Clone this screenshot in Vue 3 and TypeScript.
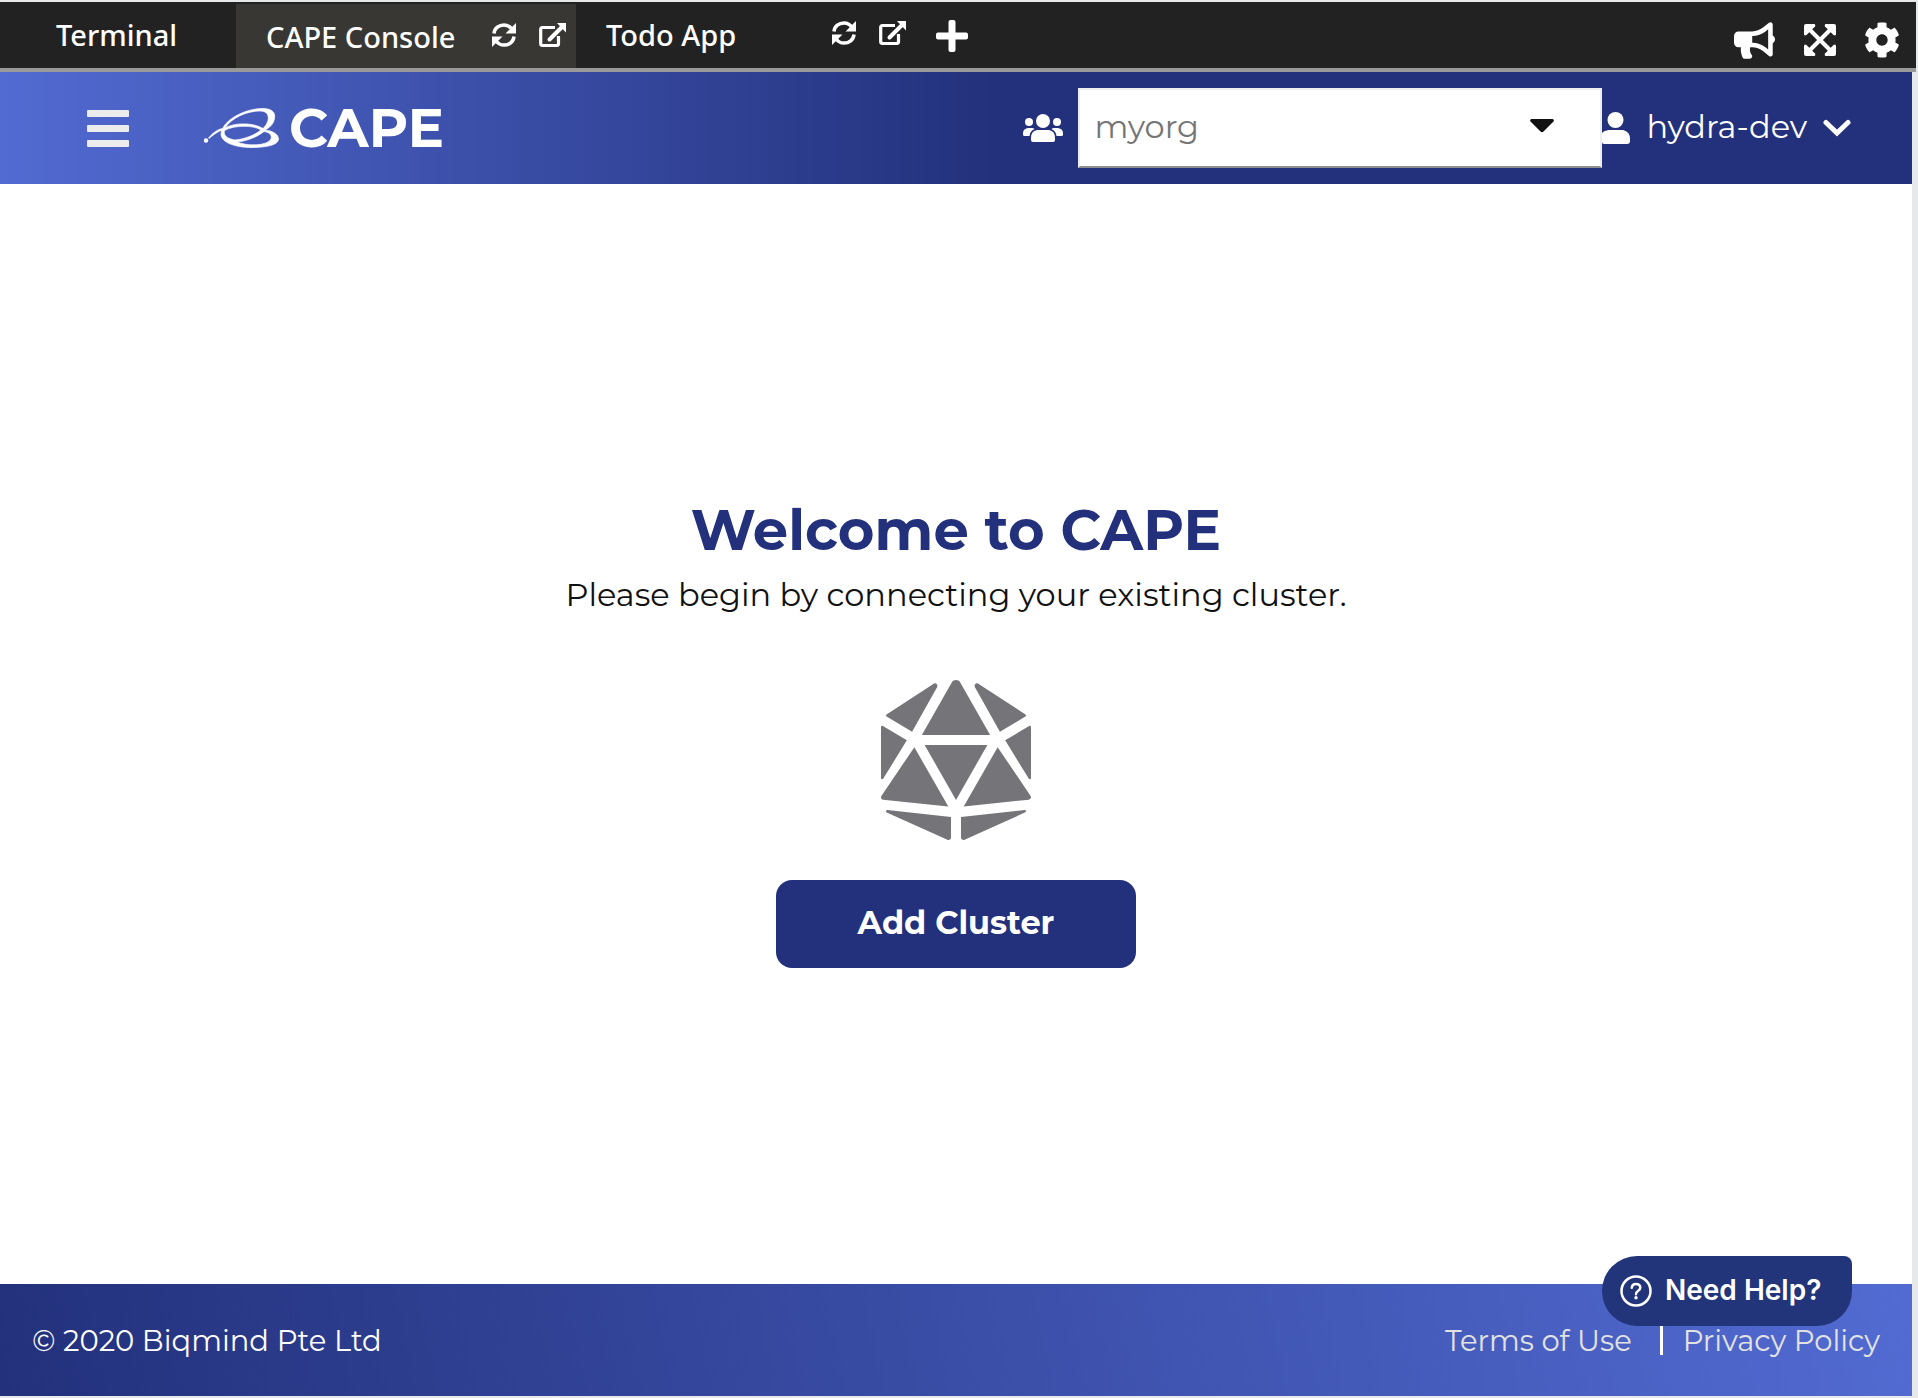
<script setup lang="ts">
import { ref } from 'vue'

interface Tab {
  name: string
  active: boolean
  tools: boolean
}

const tabs: Tab[] = [
  { name: 'Terminal', active: false, tools: false },
  { name: 'CAPE Console', active: true, tools: true },
  { name: 'Todo App', active: false, tools: true },
]

const org = ref('myorg')
</script>

<template>
  <div class="page">
    <nav class="tabbar">
      <div
        v-for="tab in tabs"
        :key="tab.name"
        class="tab"
        :class="{ active: tab.active, plain: !tab.tools }"
      >
        <button class="tab-name" type="button">{{ tab.name }}</button>
        <template v-if="tab.tools">
          <button class="icon-btn" type="button" aria-label="Reload">
            <svg width="24" height="24" viewBox="0 0 24 24" fill="none" stroke="#fff" stroke-width="3.500">
              <path d="M2 10.500C2.500 5 7 1.900 12 1.900c4 0 6.500 2 8.500 5" />
              <path d="M22 13.500C21.500 19 17 22.100 12 22.100c-4 0-6.500-2-8.500-5" />
              <path d="M24 0v10.500H13.500l3.500-3.500L21 3z" fill="#fff" stroke="none" />
              <path d="M0 24V13.500h10.500L7 17 3 21z" fill="#fff" stroke="none" />
            </svg>
          </button>
          <button class="icon-btn" type="button" aria-label="Open in new window">
            <svg width="27" height="24" viewBox="0 0 27 24" fill="none" stroke="#fff">
              <path d="M16 4.500H3.500Q1.700 4.500 1.700 6.500v14q0 2 2 2H17.500q2 0 2-2V13" stroke-width="3.200" />
              <path d="M10.500 16.500 22.500 4.500" stroke-width="4" stroke-linecap="round" />
              <path d="M18 0h9v9.500z" fill="#fff" stroke="none" />
            </svg>
          </button>
        </template>
      </div>
      <button class="add" type="button" aria-label="Add tab">
        <svg width="32" height="32" viewBox="0 0 32 32" fill="#fff">
          <rect x="12.500" width="7" height="32" rx="2" />
          <rect y="12.500" width="32" height="7" rx="2" />
        </svg>
      </button>
      <div class="tab-actions">
        <button class="icon-btn" type="button" aria-label="Announcements">
          <svg width="41" height="37" viewBox="0 0 576 512" fill="#fff">
            <path d="M576 240c0-23.630-12.950-44.040-32-55.120V32.010C544 23.260 537.020 0 512 0c-7.120 0-14.190 2.380-19.980 7.020l-85.030 68.030C364.280 109.190 310.660 128 256 128H64c-35.350 0-64 28.650-64 64v96c0 35.350 28.650 64 64 64h33.700c-1.390 10.480-2.180 21.140-2.180 32 0 39.770 9.260 77.350 25.560 110.940 5.190 10.690 16.520 17.060 28.400 17.060h74.280c26.050 0 41.690-29.840 25.900-50.560-16.400-21.520-26.150-48.360-26.150-77.440 0-11.110 1.620-21.790 4.410-32H256c54.660 0 108.280 18.810 150.980 52.950l85.030 68.030a32.023 32.023 0 0 0 19.980 7.020c24.920 0 32-22.780 32-32V295.130C563.050 284.040 576 263.630 576 240zm-96 141.420l-33.050-26.440C392.950 311.780 325.120 288 256 288v-96c69.120 0 136.950-23.780 190.950-66.980L480 98.580v282.840z" />
          </svg>
        </button>
        <button class="icon-btn" type="button" aria-label="Full screen">
          <svg width="32" height="32" viewBox="0 0 32 32" fill="#fff">
            <path d="M5 5 27 27M27 5 5 27" stroke="#fff" stroke-width="4" />
            <path d="M2 0h8.500q1.500 1 .5 2.500L2.500 11Q1 12 0 10.500V2Q0 0 2 0z" />
            <path d="M30 0h-8.500q-1.500 1-.5 2.500L29.500 11Q31 12 32 10.500V2Q32 0 30 0z" />
            <path d="M2 32h8.500q1.500-1 .5-2.500L2.500 21Q1 20 0 21.500V30Q0 32 2 32z" />
            <path d="M30 32h-8.500q-1.500-1-.5-2.500L29.500 21Q31 20 32 21.500V30Q32 32 30 32z" />
          </svg>
        </button>
        <button class="icon-btn" type="button" aria-label="Settings">
          <svg width="34" height="36" viewBox="16 8 480 496" fill="#fff">
            <path d="M487.400 315.700l-42.600-24.600c4.300-23.200 4.300-47 0-70.200l42.600-24.600c4.900-2.800 7.100-8.600 5.500-14-11.100-35.600-30-67.800-54.700-94.600-3.800-4.100-10-5.100-14.800-2.300L380.800 110c-17.900-15.400-38.500-27.300-60.800-35.100V25.800c0-5.600-3.900-10.500-9.400-11.700-36.700-8.200-74.300-7.800-109.200 0-5.500 1.200-9.400 6.100-9.400 11.700V75c-22.200 7.900-42.800 19.800-60.800 35.100L88.700 85.500c-4.900-2.800-11-1.900-14.800 2.300-24.700 26.700-43.600 58.900-54.700 94.600-1.700 5.400.6 11.200 5.500 14L67.300 221c-4.300 23.200-4.300 47 0 70.200l-42.600 24.600c-4.900 2.800-7.100 8.600-5.500 14 11.100 35.600 30 67.800 54.700 94.600 3.800 4.100 10 5.100 14.800 2.300l42.600-24.600c17.900 15.400 38.500 27.300 60.800 35.100v49.200c0 5.600 3.900 10.500 9.400 11.700 36.700 8.200 74.300 7.800 109.200 0 5.500-1.200 9.400-6.100 9.400-11.700v-49.200c22.200-7.900 42.800-19.800 60.800-35.100l42.600 24.600c4.900 2.800 11 1.900 14.800-2.300 24.700-26.700 43.600-58.900 54.700-94.600 1.500-5.500-.7-11.300-5.600-14.100zM256 336c-44.100 0-80-35.900-80-80s35.900-80 80-80 80 35.900 80 80-35.900 80-80 80z" />
          </svg>
        </button>
      </div>
    </nav>

    <div class="console">
      <header class="header">
        <button class="menu" type="button" aria-label="Menu"><i></i><i></i><i></i></button>
        <a class="logo" href="#">
          <svg width="75" height="40" viewBox="0 0 75 40" fill="none" stroke="#fff">
            <circle cx="2" cy="32.500" r="2.200" fill="#fff" stroke="none" />
            <path
              fill="#fff"
              fill-rule="evenodd"
              stroke="#fff"
              stroke-width=".7"
              d="M4.500 30C9 25 13 21.500 18.500 20.500C25 8 45 .5 58 .5C69 .5 73 5 69.500 14C67.500 18 64 20.500 61 22C70 23 74.500 27 74.500 31C74.500 37 62 39.500 48 39.500C30 39.500 17 34 17 26Q17 24 18 22C13 24 9 27 5 30.500zM21 20C26 17 34 15.500 43 16C49 16.300 55 18 59 20.500C66 14 67 3 56 3C44 3 28 9 21 20zM20.500 22.500C19 27 23 31 31 32C41 31 51 27 57 22C50 17 30 17 20.500 22.500zM33 34C42 38 63 38.500 67 31C68 27 66 24.500 60 23.500C53 29 43 33 33 34z"
            />
          </svg>
          <span class="brand">CAPE</span>
        </a>
        <div class="account">
          <svg class="team" width="40" height="28" viewBox="0 0 40 28" fill="#fff">
            <circle cx="20" cy="7" r="7" />
            <circle cx="6" cy="8" r="4" />
            <circle cx="34" cy="8" r="4" />
            <path d="M14 16h12q6 1 6 8v2q0 2-2 2H10q-2 0-2-2v-2q0-7 6-8z" />
            <path d="M5 14h4q1.500 0 2.500 1-4.500 2-5 7H1.500Q0 22 0 20.500V19q0-4 5-5zM35 14h-4q-1.500 0-2.500 1 4.500 2 5 7h5q1.500 0 1.500-1.500V19q0-4-5-5z" />
          </svg>
          <label class="org">
            <select v-model="org" aria-label="Organisation">
              <option>myorg</option>
            </select>
            <svg class="caret" width="24" height="14" viewBox="0 0 24 14" fill="#111">
              <path d="M1.500 0h21q2 .5 1 2.500l-10 10q-1.500 1.500-3 0L.5 2.500Q-.5.500 1.500 0z" />
            </svg>
          </label>
          <button class="user" type="button">
            <svg width="28" height="32" viewBox="0 0 28 32" fill="#fff">
              <circle cx="13.500" cy="8" r="8" />
              <path d="M7 18h14q7 1.500 7 9v2q0 3-3 3H2q-2 0-2-2V21q2-2.500 7-3z" />
            </svg>
            <span>hydra-dev</span>
            <svg width="28" height="18" viewBox="0 0 28 18" fill="none" stroke="#fff" stroke-width="5" stroke-linecap="round">
              <path d="M3 3.500 14 14 25 3.500" />
            </svg>
          </button>
        </div>
      </header>

      <main class="main">
        <h1>Welcome to CAPE</h1>
        <p>Please begin by connecting your existing cluster.</p>
        <svg width="150" height="160" viewBox="0 0 480 512" fill="#757479">
          <path d="M106.750 215.060L1.200 370.950c-3.080 5 .1 11.500 5.930 12.140l208.260 22.070-108.640-190.100zM7.410 315.430L82.700 193.080 6.060 147.100c-2.670-1.620-6.060.3-6.060 3.400v162.830c0 4.030 5.290 5.530 7.410 2.100zM18.250 423.600l194.400 87.660c5.300 2.450 11.350-1.430 11.350-7.260v-65.670l-203.550-22.300c-4.450-.5-6.230 5.590-2.200 7.570zm81.220-257.780L179.400 22.880c4.340-7.060-3.590-15.250-10.780-11.140L17.810 110.350c-2.470 1.620-2.390 5.260.13 6.780l81.530 48.690zM240 176h109.210L253.630 7.620C250.500 2.540 245.250 0 240 0s-10.500 2.540-13.630 7.620L130.790 176H240zm233.940-28.900l-76.640 45.990 75.290 122.350c2.110 3.440 7.410 1.940 7.410-2.100V150.500c0-3.110-3.390-5.030-6.060-3.400zm-93.410 18.720l81.530-48.700c2.530-1.520 2.600-5.160.13-6.780l-150.810-98.600c-7.190-4.110-15.120 4.070-10.780 11.140l79.930 142.940zm79.020 250.210L256 438.320v65.670c0 5.840 6.050 9.710 11.350 7.260l194.400-87.660c4.030-1.970 2.250-8.060-2.200-7.560zm-86.300-200.970l-108.630 190.100 208.260-22.070c5.830-.65 9.010-7.140 5.930-12.140L373.250 215.060zM240 208H139.570L240 383.750 340.430 208H240z" />
        </svg>
        <button class="primary" type="button">Add Cluster</button>
      </main>

      <footer class="footer">
        <span>© 2020 Biqmind Pte Ltd</span>
        <div class="links">
          <a href="#">Terms of Use</a>
          <i></i>
          <a href="#">Privacy Policy</a>
        </div>
        <button class="help" type="button">
          <svg width="32" height="32" viewBox="0 0 32 32" fill="none" stroke="#fff">
            <circle cx="16" cy="16" r="14.500" stroke-width="2.500" />
            <path d="M11.800 12.800Q12 9 16 9t4.300 3.500q0 2-2.300 3.500t-2 3.200" stroke-width="2.500" stroke-linecap="round" />
            <circle cx="16" cy="22.800" r="1.700" fill="#fff" stroke="none" />
          </svg>
          <span>Need Help?</span>
        </button>
      </footer>
    </div>
  </div>
</template>

<style>
body {
  margin: 0;
  background: #ebedee;
}
</style>

<style scoped>
.page {
  display: flex;
  flex-direction: column;
  box-sizing: border-box;
  min-height: 100vh;
  padding: 2px 0;
  background: #e6e8e9;
  font-family: Montserrat, Inter, "Liberation Sans", sans-serif;
}
button {
  padding: 0;
  border: 0;
  background: none;
  color: inherit;
  font: inherit;
  cursor: pointer;
}
svg {
  display: block;
  flex: none;
}
a {
  color: inherit;
  text-decoration: none;
}
.tabbar {
  display: flex;
  height: 66px;
  margin-right: 2px;
  border-bottom: 4px solid #999;
  background: #222;
  color: #fff;
  font-family: "Noto Sans", "Open Sans", sans-serif;
  font-size: 29px;
  font-weight: 500;
}
.tab {
  display: flex;
  align-items: center;
  box-sizing: border-box;
  width: 340px;
  padding: 0 10px 2px 30px;
}
.tab.plain {
  width: 236px;
  padding-left: 56px;
}
.tab.active {
  margin-top: 2px;
  padding-bottom: 0;
  background: #383733;
}
.tab-name {
  flex: 1;
  text-align: left;
  white-space: nowrap;
}
.icon-btn + .icon-btn {
  margin-left: 23px;
}
.tab .icon-btn {
  margin-bottom: 3px;
}
.add {
  margin: 2px 0 0 20px;
}
.tab-actions {
  display: flex;
  align-items: center;
  margin: 10px 17px 0 auto;
}
.tab-actions .icon-btn + .icon-btn {
  margin-left: 29px;
}
.console {
  display: flex;
  flex: 1;
  flex-direction: column;
  margin-right: 6px;
  background: #fff;
}
.header {
  display: flex;
  align-items: center;
  height: 112px;
  background: linear-gradient(90deg, #526bd2, #23317c 52%);
  color: #fff;
}
.menu {
  display: grid;
  gap: 8px;
  width: 42px;
  margin-left: 87px;
}
.menu i {
  height: 7px;
  border-radius: 1px;
  background: #ececec;
}
.logo {
  display: flex;
  align-items: center;
  gap: 10px;
  margin-left: 75px;
}
.brand {
  font-size: 54px;
  font-weight: 700;
  line-height: 56px;
}
.account {
  display: flex;
  align-items: center;
  margin-left: auto;
}
.team {
  margin-right: 15px;
}
.org {
  position: relative;
}
.org select {
  display: block;
  box-sizing: border-box;
  width: 524px;
  height: 80px;
  padding: 0 14px 4px;
  border: 2px solid #eee;
  border-bottom-color: #8e8e8e;
  border-radius: 0;
  background: #fff;
  color: #757575;
  font: 400 32px Montserrat, Inter, sans-serif;
  appearance: none;
}
.caret {
  position: absolute;
  top: 31px;
  right: 48px;
  pointer-events: none;
}
.user {
  display: flex;
  align-items: center;
  gap: 16px;
  margin-right: 61px;
  font-size: 32px;
}
.user span {
  padding-bottom: 3px;
}
.main {
  display: flex;
  flex: 1;
  flex-direction: column;
  align-items: center;
  justify-content: center;
  padding-bottom: 2px;
}
.main h1 {
  margin: 0;
  color: #23317c;
  font-size: 56px;
  font-weight: 700;
  line-height: 64px;
}
.main p {
  margin: 9px 0 61px;
  color: #111;
  font-size: 32px;
  line-height: 48px;
}
.primary {
  box-sizing: border-box;
  width: 360px;
  height: 88px;
  margin-top: 40px;
  padding-bottom: 3px;
  border-radius: 16px;
  background: #23317c;
  color: #fff;
  font-size: 32px;
  font-weight: 700;
}
.footer {
  position: relative;
  display: flex;
  align-items: center;
  justify-content: space-between;
  box-sizing: border-box;
  height: 112px;
  padding: 0 32px;
  background: linear-gradient(78deg, #23317c, #526bd2);
  color: #fff;
  font-size: 29px;
}
.links {
  display: flex;
  align-items: center;
  color: #e2e2e2;
}
.links i {
  width: 3px;
  height: 30px;
  margin: 0 20px 0 28px;
  background: #fff;
}
.help {
  position: absolute;
  top: -28px;
  right: 60px;
  display: flex;
  align-items: center;
  gap: 13px;
  width: 250px;
  height: 70px;
  padding-left: 18px;
  border-radius: 35px 8px 35px 35px;
  background: #22357a;
  font-family: Inter, "Liberation Sans", sans-serif;
  font-size: 28px;
  font-weight: 600;
}
.help span {
  padding-bottom: 2px;
}
</style>
